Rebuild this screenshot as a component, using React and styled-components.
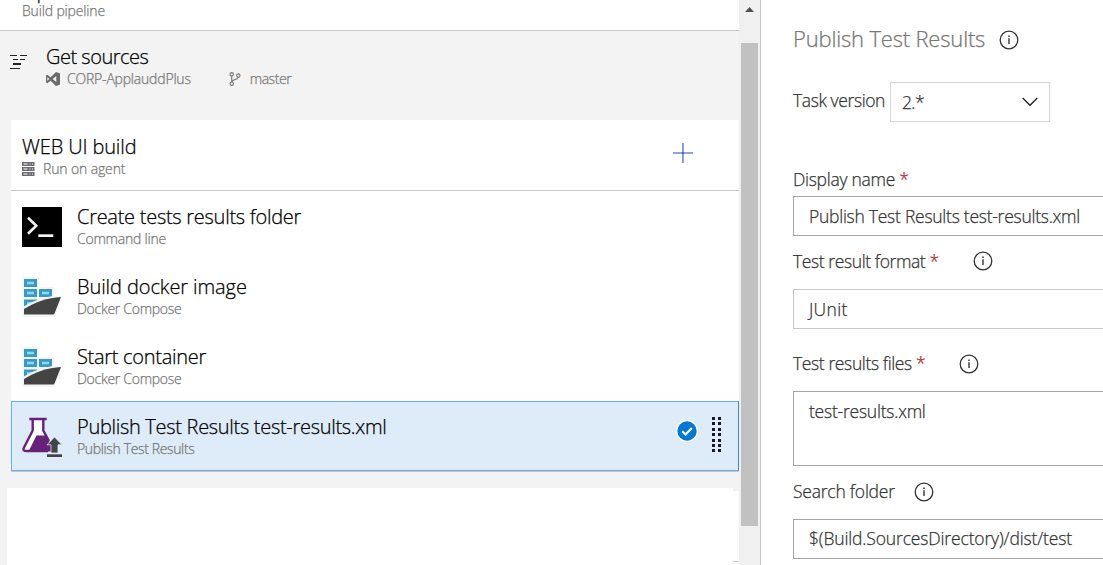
import React from "react";
import styled, { createGlobalStyle } from "styled-components";

const Global = createGlobalStyle`
  * { box-sizing: border-box; }
  body { margin: 0; background: #fff; font-family: "Open Sans", "Noto Sans", sans-serif; font-weight: 300; overflow: hidden; }
`;

const Page = styled.div`
  display: flex;
  width: 1103px;
  height: 565px;
  overflow: hidden;
`;
const Pipeline = styled.div`
  display: flex;
  flex-direction: column;
  width: 739px;
  background: #f3f3f3;
`;
const Text = styled.span`
  display: block;
  width: max-content;
  white-space: pre;
  font-size: ${(p) => p.$size}px;
  line-height: ${(p) => p.$line}px;
  letter-spacing: ${(p) => p.$track || 0}px;
  margin-top: ${(p) => -(p.$lift || 0)}px;
  color: ${(p) => p.$color || "#333"};
  -webkit-text-stroke: 0.25px currentColor;
`;
const Title = (p) => <Text $size={20} $line={24} $color="#000" {...p} />;
const Sub = (p) => <Text $size={14} $line={20} $color="#767676" {...p} />;
const Label = (p) => <Text $size={17.5} $line={24} $color="#333" {...p} />;

const PipelineHeader = styled.header`
  display: flex;
  flex-direction: column;
  justify-content: flex-end;
  height: 31px;
  padding: 0 0 9px 22px;
  background: #fff;
  border-bottom: 1px solid #c8c8c8;
  overflow: hidden;
  flex: none;
`;
const Sources = styled.section`
  display: flex;
  height: 89px;
  flex: none;
  padding: 14px 0 0 10px;
  gap: 19px;
`;
const SourcesIcon = styled.div`
  width: 17px;
  padding-top: 9px;
  line-height: 0;
`;
const Meta = styled.div`
  display: flex;
  align-items: center;
  height: 20px;
  gap: ${(p) => p.$gap}px;
`;
const MetaBranch = styled(Meta)`
  margin-left: 31px;
`;
const Job = styled.section`
  display: flex;
  justify-content: space-between;
  height: 71px;
  flex: none;
  margin-left: 11px;
  padding: 15px 46px 0 11px;
  background: #fff;
  border-bottom: 1px solid #c8c8c8;
`;
const AddButton = styled.button`
  width: 20px;
  height: 20px;
  margin-top: 8px;
  padding: 0;
  border: 0;
  background: none;
  line-height: 0;
`;
const Task = styled.div`
  display: flex;
  height: 70px;
  flex: none;
  margin-left: 11px;
  padding: ${(p) => (p.$selected ? "13px 17px 0 10px" : "14px 18px 0 11px")};
  gap: 15px;
  background: ${(p) => (p.$selected ? "#deecf9" : "#fff")};
  border: ${(p) => (p.$selected ? "1px solid #6aabf5" : "0")};
  border-right-color: #3a87e0;
`;
const TaskIcon = styled.div`
  width: 40px;
  height: 40px;
  margin-top: 2px;
  line-height: 0;
`;
const TaskBody = styled.div`
  flex: 1;
`;
const TaskState = styled.div`
  display: flex;
  gap: 14px;
  line-height: 0;
`;
const Check = styled.div`
  margin-top: 5px;
`;
const Grip = styled.div`
  display: grid;
  grid-template-columns: 3px 3px;
  grid-auto-rows: 3px;
  gap: 2.4px 3px;
  height: 40px;
  margin-top: 2px;
`;
const GripDot = styled.i`
  background: #1c1626;
`;
const Gap = styled.div`
  height: 17px;
  flex: none;
  margin-left: 11px;
  border-top: 1px solid #c8c8c8;
`;
const Bottom = styled.div`
  display: flex;
  flex: 1;
  margin-left: 7px;
`;
const BottomMain = styled.div`
  flex: 1;
  background: #fff;
`;
const BottomEdge = styled.div`
  width: 6px;
  margin-top: 3px;
  background: #fff;
  display: flex;
  align-items: flex-end;
  padding-bottom: 3px;
  &::after { content: ""; flex: 1; height: 1px; background: #c8c8c8; }
`;
const ScrollBar = styled.div`
  width: 22px;
  padding: 7px 2px 0 2px;
  background: #f0f0f0;
  border-right: 1px solid #c8c8c8;
`;
const ScrollArrow = styled.svg`
  display: block;
  margin: 0 auto 31px 4px;
`;
const ScrollThumb = styled.div`
  width: 17px;
  height: 483px;
  background: #c1c1c1;
`;
const Details = styled.main`
  flex: 1;
  min-width: 0;
  padding: 23px 0 0 32px;
  overflow: hidden;
`;
const FieldRow = styled.div`
  display: flex;
  align-items: center;
  height: ${(p) => p.$height}px;
  margin-top: ${(p) => p.$top || 0}px;
  gap: ${(p) => p.$gap || 0}px;
`;
const InfoIcon = styled.svg`
  flex: none;
  margin-top: ${(p) => p.$drop || 0}px;
`;
const Required = styled.span`
  color: #b4282d;
`;
const Select = styled.div`
  display: flex;
  justify-content: space-between;
  align-items: center;
  width: 160px;
  height: 40px;
  padding: 0 11px 0 11px;
  border: 1px solid #d6d6d6;
`;
const Input = styled.div`
  width: 340px;
  height: ${(p) => p.$height || 40}px;
  margin-top: ${(p) => p.$top}px;
  padding: ${(p) => p.$pad || 7}px 0 0 15px;
  border: 1px solid ${(p) => p.$border || "#a6a6a6"};
`;

const Info = ({ drop }) => (
  <InfoIcon $drop={drop} width="20" height="20" viewBox="0 0 20 20" fill="none" stroke="#333">
    <circle cx="10" cy="10" r="8.8" strokeWidth="1.3" />
    <path d="M10 8.2V14" strokeWidth="1.4" />
    <path d="M10 5.4V6.9" strokeWidth="1.5" />
  </InfoIcon>
);
const CommandLine = () => (
  <svg width="40" height="40" viewBox="0 0 40 40">
    <path fill="#000" d="M0 0h40v40H0z" />
    <path d="M6 10.7l8.3 8.1L6 26.8" fill="none" stroke="#f2f2f2" strokeWidth="2.6" />
    <path d="M16.3 27.3h15v2.7h-15z" fill="#f2f2f2" />
  </svg>
);
const Box = ({ x, y }) => (
  <g>
    <path d={`M${x} ${y}h13v8h-13z`} fill="#3999c6" />
    <path d={`M${x + 3} ${y + 2.7}h7v2.6h-7z`} fill="#84dcf5" />
  </g>
);
const Docker = () => (
  <svg width="40" height="40" viewBox="0 0 40 40">
    <path fill="#f5f5f5" d="M0 0h17v10h15v9h8l-7 21H0z" />
    <Box x={2} y={2} />
    <Box x={2} y={12} />
    <Box x={17} y={12} />
    <Box x={2} y={22.5} />
    <path fill="#f5f5f5" d="M1 30C11 23.500 24 19 39 18.5L38 32H1z" />
    <path fill="#444" d="M2 32C12 25.500 26 20.500 39 20L32.500 36.500Q32 37.500 31 37.500H2z" />
  </svg>
);
const Flask = () => (
  <svg width="40" height="40" viewBox="0 0 40 40">
    <path d="M11 2V15L1.800 31.500Q0.500 35 4 35H26L28 30L20.500 15V2" fill="#fff" />
    <path d="M7.300 2H24.700M10.700 2V13.500L2 30.500Q0.300 34 4 34H26M21.300 2V13.500L27 24" fill="none" stroke="#68217a" strokeWidth="2.400" />
    <path d="M14.500 18.500H23.500L30 29V34.500H6.500z" fill="#68217a" />
    <path d="M32.500 20L40 27.800H36V36H29V27.800H25z" fill="#444" stroke="#deecf9" strokeWidth=".8" />
    <path d="M25 37.300h15v2.700H25z" fill="#444" />
  </svg>
);

const tasks = [
  { name: "Create tests results folder", kind: "Command line", Icon: CommandLine, t: -0.27, s: -0.22 },
  { name: "Build docker image", kind: "Docker Compose", Icon: Docker, t: -0.09, s: -0.28 },
  { name: "Start container", kind: "Docker Compose", Icon: Docker, t: -0.29, s: -0.28 },
  { name: "Publish Test Results test-results.xml", kind: "Publish Test Results", Icon: Flask, selected: true, t: -0.3, s: -0.36 },
];

export default function App() {
  return (
    <Page>
      <Global />
      <Pipeline>
        <PipelineHeader>
          <Title $line={20} $track={-0.8}>Pipeline</Title>
          <Sub $track={-0.16}>Build pipeline</Sub>
        </PipelineHeader>
        <Sources>
          <SourcesIcon>
            <svg width="17" height="16" viewBox="0 0 17 16" fill="#222">
              <path d="M0 1h7v1H0zM10 1h7v1h-7zM3 5h5v1H3zM10 5h5v1h-5zM3 9h8v2H3zM0 14h10v1H0z" />
            </svg>
          </SourcesIcon>
          <div>
            <Title $track={-0.5}>Get sources</Title>
            <Meta $gap={7}>
              <svg width="14" height="14" viewBox="0 0 14 14" fill="#6a6a6a" fillRule="evenodd">
                <path d="M10 0L14 1.600V12.400L10 14L4.600 8.700L1.300 11.300L0 10.500V3.500L1.300 2.700L4.600 5.300zM10.300 4L6.600 7L10.300 10zM1.300 5V9L3.200 7z" />
              </svg>
              <Sub $track={-0.2}>CORP-ApplauddPlus</Sub>
              <MetaBranch $gap={9}>
                <svg width="12" height="14" viewBox="0 0 12 14" fill="none" stroke="#767676" strokeWidth="1.100">
                  <circle cx="2.700" cy="2.300" r="1.700" />
                  <circle cx="9.300" cy="3.600" r="1.700" />
                  <circle cx="2.700" cy="11.700" r="1.700" />
                  <path d="M2.700 4V10M9.300 5.300C9.300 8 3 7 2.700 10" />
                </svg>
                <Sub $track={-0.45}>master</Sub>
              </MetaBranch>
            </Meta>
          </div>
        </Sources>
        <Job>
          <div>
            <Title $track={-0.12}>WEB UI build</Title>
            <Meta $gap={8}>
              <svg width="13" height="14" viewBox="0 0 13 14">
                <path fill="#6b6b70" d="M0 0h12.500v4H0zM0 5h12.500v4H0zM0 10h12.500v4H0z" />
                <path fill="#fff" d="M1.500 1.500h4v1h-4zM7.500 1.500h1v1h-1zM10 1.500h1v1h-1zM1.500 6.500h4v1h-4zM7.500 6.500h1v1h-1zM10 6.500h1v1h-1zM1.500 11.500h4v1h-4zM7.500 11.500h1v1h-1zM10 11.500h1v1h-1z" />
              </svg>
              <Sub $track={-0.13}>Run on agent</Sub>
            </Meta>
          </div>
          <AddButton aria-label="Add task">
            <svg width="20" height="20" viewBox="0 0 20 20">
              <path d="M0 9h20v2H0z" fill="#94a3dc" />
              <path d="M9 0h1v20H9z" fill="#b083c4" />
              <path d="M10 0h1v20h-1z" fill="#6fb1ea" />
              <path d="M9 9h2v2H9z" fill="#3c6fc4" />
            </svg>
          </AddButton>
        </Job>
        {tasks.map(({ name, kind, Icon, selected, t, s }) => (
          <Task key={name} $selected={selected}>
            <TaskIcon><Icon /></TaskIcon>
            <TaskBody>
              <Title $track={t}>{name}</Title>
              <Sub $track={s}>{kind}</Sub>
            </TaskBody>
            {selected && (
              <TaskState>
                <Check>
                  <svg width="22" height="22" viewBox="0 0 22 22">
                    <circle cx="11" cy="11" r="11" fill="#fff" />
                    <circle cx="11" cy="11" r="9.700" fill="#0078d7" />
                    <path d="M6.200 11.200L9.600 14.500L15.800 8" fill="none" stroke="#fff" strokeWidth="2.200" />
                  </svg>
                </Check>
                <Grip>{Array.from({ length: 14 }, (_, i) => <GripDot key={i} />)}</Grip>
              </TaskState>
            )}
          </Task>
        ))}
        <Gap />
        <Bottom>
          <BottomMain />
          <BottomEdge />
        </Bottom>
      </Pipeline>
      <ScrollBar>
        <ScrollArrow width="9" height="5" viewBox="0 0 9 5"><path d="M4.500 0L9 5H0z" fill="#505050" /></ScrollArrow>
        <ScrollThumb />
      </ScrollBar>
      <Details>
        <FieldRow $height={32} $gap={14}>
          <Text $size={22} $line={30} $lift={2} $track={-0.18} $color="#767676">Publish Test Results</Text>
          <Info drop={2} />
        </FieldRow>
        <FieldRow $height={40} $top={27} $gap={5}>
          <Label $lift={4} $track={-0.4}>Task version</Label>
          <Select>
            <Label $track={-0.6}>2.*</Label>
            <svg width="16" height="10" viewBox="0 0 16 10" fill="none" stroke="#222" strokeWidth="1.300"><path d="M.7 1L8 8.300L15.300 1" /></svg>
          </Select>
        </FieldRow>
        <FieldRow $height={24} $top={46}>
          <Label $lift={2} $track={-0.28}>Display name <Required>*</Required></Label>
        </FieldRow>
        <Input $top={4}><Label $track={-0.26}>Publish Test Results test-results.xml</Label></Input>
        <FieldRow $height={24} $top={13} $gap={34}>
          <Label $track={-0.4}>Test result format <Required>*</Required></Label>
          <Info />
        </FieldRow>
        <Input $top={16} $border="#c8c8c8"><Label $track={0.3}>JUnit</Label></Input>
        <FieldRow $height={24} $top={23} $gap={34}>
          <Label $lift={2} $track={-0.38}>Test results files <Required>*</Required></Label>
          <Info />
        </FieldRow>
        <Input $top={15} $height={75}><Label $track={-0.23}>test-results.xml</Label></Input>
        <FieldRow $height={24} $top={14} $gap={19}>
          <Label $lift={2} $track={-0.23}>Search folder</Label>
          <Info />
        </FieldRow>
        <Input $top={15} $pad={6}><Label $track={-0.15}>$(Build.SourcesDirectory)/dist/test</Label></Input>
      </Details>
    </Page>
  );
}
